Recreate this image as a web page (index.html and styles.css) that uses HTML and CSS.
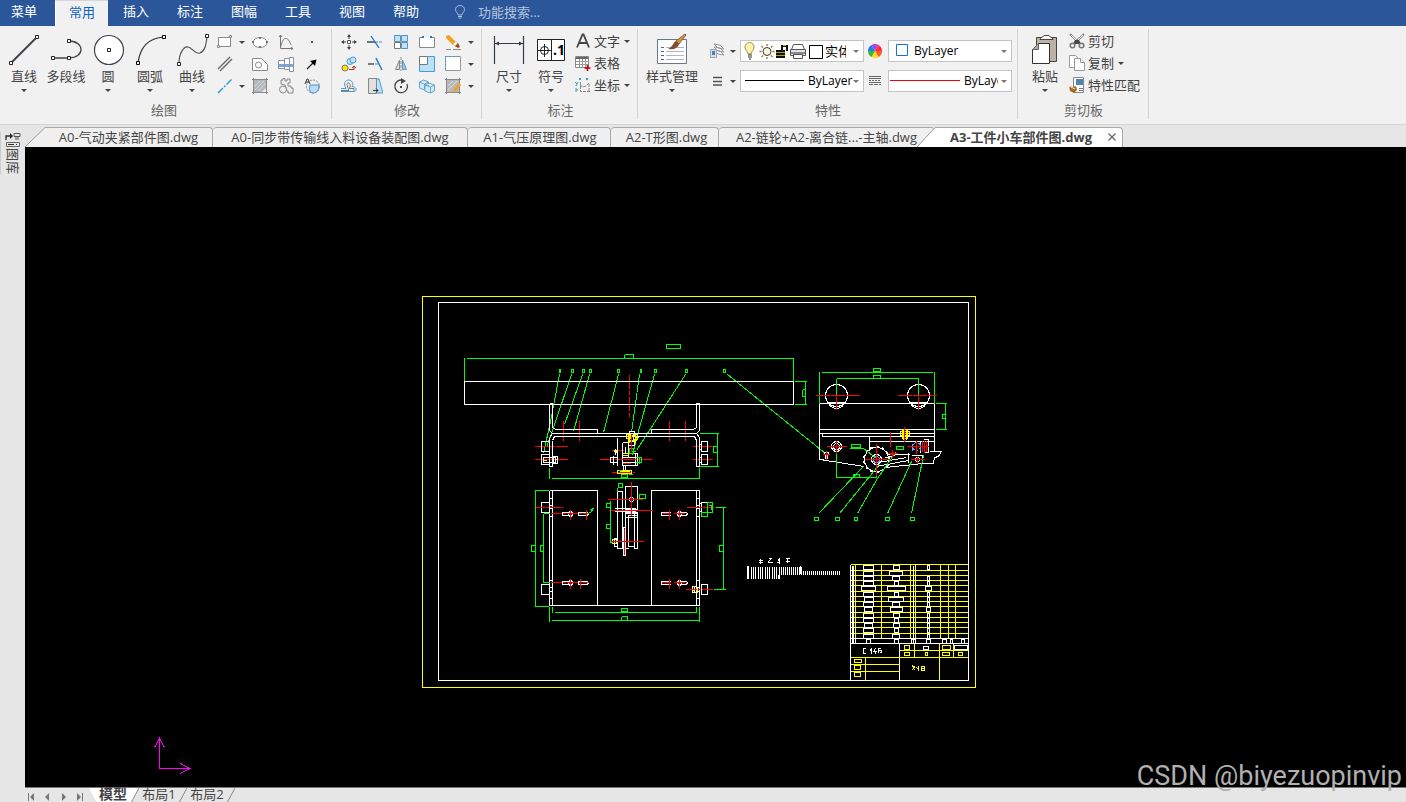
FILE: index.html
```html
<!DOCTYPE html>
<html lang="zh-CN">
<head>
<meta charset="utf-8">
<title>A3-工件小车部件图.dwg</title>
<link rel="stylesheet" href="styles.css">
</head>
<body>
<nav class="menubar">
  <button class="menu-item menu-first">菜单</button>
  <button class="menu-item is-active">常用</button>
  <button class="menu-item">插入</button>
  <button class="menu-item">标注</button>
  <button class="menu-item">图幅</button>
  <button class="menu-item">工具</button>
  <button class="menu-item">视图</button>
  <button class="menu-item">帮助</button>
  <label class="search">
    <svg width="12" height="14" viewBox="0 0 12 14" fill="none" stroke="#a9bcd9"><path d="M4 10V9C3 7.500 1.500 6.500 1.500 4.500a4.500 4 0 0 1 9 0C10.500 6.500 9 7.500 8 9v1z"/><path d="M4 11.500h4M4.500 13h3"/></svg>
    <input type="text" placeholder="功能搜索..." aria-label="功能搜索">
  </label>
</nav>

<header class="ribbon">
  <section class="group g-draw">
    <div class="group-body">
      <button class="big"><svg width="34" height="34" viewBox="0 0 34 34"><path d="M4 30 30 4" stroke="#3f444d" stroke-width="2"/><g fill="#fff" stroke="#222"><path d="M2.500 28.500h3v3h-3zM28.500 2.500h3v3h-3z"/></g></svg><span>直线</span><i class="caret"></i></button>
      <button class="big"><svg width="34" height="34" viewBox="0 0 34 34"><path d="M4 25h16c16 0 16-17 0-17" fill="none" stroke="#3f444d" stroke-width="1.300"/><g fill="#fff" stroke="#222"><path d="M2.500 23.500h3v3h-3zM18.500 23.500h3v3h-3zM18.500 6.500h3v3h-3z"/></g></svg><span>多段线</span></button>
      <button class="big"><svg width="34" height="34" viewBox="0 0 34 34"><circle cx="18" cy="17" r="14.500" fill="#fff" stroke="#3f444d" stroke-width="1.200"/><path d="M16.500 15.500h3v3h-3z" fill="#fff" stroke="#222"/></svg><span>圆</span><i class="caret"></i></button>
      <button class="big"><svg width="34" height="34" viewBox="0 0 34 34"><path d="M5 30C7 14 16 5 31 4" fill="none" stroke="#333" stroke-width="1.200"/><g fill="#fff" stroke="#000"><path d="M3.500 28.500h3v3h-3zM29.500 2.500h3v3h-3z"/></g></svg><span>圆弧</span><i class="caret"></i></button>
      <button class="big"><svg width="34" height="34" viewBox="0 0 34 34"><path d="M4 30C4 20 9 13 13 14c5 1 7 8 12 6 5-2 6-8 7-16" fill="none" stroke="#555" stroke-width="1.200"/><g fill="#fff" stroke="#222"><path d="M2.500 29.500h3v3h-3zM30.500 1.500h3v3h-3z"/></g></svg><span>曲线</span><i class="caret"></i></button>
      <div class="tools tools-draw">
        <button aria-label="矩形"><svg width="16" height="16" viewBox="0 0 16 16" fill="#fff" stroke="#888"><path d="M1.500 3.500h12v9h-12z"/><path d="M12.500 1.500h2v2h-2zM.5 11.500h2v2h-2z"/></svg></button>
        <button aria-label="矩形选项"><i class="caret"></i></button>
        <button aria-label="椭圆"><svg width="16" height="16" viewBox="0 0 16 16"><ellipse cx="8" cy="8.500" rx="7" ry="5" fill="#fff" stroke="#888"/><path d="M0 7h2v2H0zM14 7h2v2h-2zM7 3h2v2H7zM7 12h2v2H7z" fill="#777"/></svg></button>
        <button aria-label="函数曲线"><svg width="16" height="16" viewBox="0 0 16 16" fill="none" stroke="#777"><path d="M2.500 1v13.500H15M1 3l1.500-2L4 3M13 13l2 1.500-2 1.500M3 12C5 2 10 2 13 11"/></svg></button>
        <button aria-label="点"><svg width="16" height="16" viewBox="0 0 16 16"><path d="M7 7h2v2H7z" fill="#555"/></svg></button>
        <button aria-label="平行线"><svg width="16" height="16" viewBox="0 0 16 16" stroke="#666" stroke-width="1.400"><path d="M1 13 13 1M3 15 15 3"/></svg></button>
        <span></span>
        <button aria-label="轮廓"><svg width="16" height="16" viewBox="0 0 16 16" fill="#fff" stroke="#888"><path d="M.5 2.500h9l6 6v6H.5z"/><circle cx="6.500" cy="9" r="3"/></svg></button>
        <button aria-label="轴"><svg width="16" height="16" viewBox="0 0 16 16" stroke="#8a93a0" fill="#fff"><path d="M.5 4.500h6v8h-6zM6.500 2.500h5v11h-5zM11.500 1.500h4v14h-4z"/><path d="M1 8h5v3H1zM7 8h4v3H7zM12 8h3v3h-3z" fill="#7ba6d8" stroke="none"/></svg></button>
        <button aria-label="箭头"><svg width="16" height="16" viewBox="0 0 16 16"><path d="m3 13 6-6" stroke="#222" stroke-width="1.200"/><path d="M12.500 3.500 11 10 6 5z" fill="#000"/></svg></button>
        <button aria-label="中心线"><svg width="16" height="16" viewBox="0 0 16 16"><path d="M1 15 15 1" stroke="#2e9fe0" stroke-width="1.500" stroke-dasharray="7 1.500 2 1.500"/></svg></button>
        <button aria-label="中心线选项"><i class="caret"></i></button>
        <button aria-label="剖面线"><svg width="16" height="16" viewBox="0 0 16 16"><path d="M2 2h12v12H2z" fill="#b4b9bc"/><path d="M1.500 0v16M14.500 0v16M0 1.500h16M0 14.500h16" stroke="#888"/><path d="m3 8 5-5M3 12l9-9M6 13l7-7" stroke="#d4d4d4"/><path d="m10 14 4-4v4z" fill="#eee"/></svg></button>
        <button aria-label="齿形"><svg width="16" height="16" viewBox="0 0 16 16" fill="#eee" stroke="#888"><path d="M3 6V2h2V.500h2V3h2V1h3v4h-2v3h3v2h2v5h-5v-2H9l-2-6z"/><circle cx="5" cy="11.500" r="3.500"/></svg></button>
        <button aria-label="局部放大"><svg width="16" height="16" viewBox="0 0 16 16"><circle cx="9" cy="8.500" r="6.500" fill="none" stroke="#888" stroke-dasharray="2 1"/><path d="M6 7h9c0 5-2 8-6 8-3 0-4-3-3-8z" fill="#b9dcf7" stroke="#4a90c8"/><path d="M1 6 3 1h1l2 5M2 4h3" fill="none" stroke="#333"/></svg></button>
      </div>
    </div>
    <h2>绘图</h2>
  </section>

  <section class="group g-modify">
    <div class="group-body">
      <div class="tools tools-modify">
        <button aria-label="平移"><svg width="16" height="16" viewBox="0 0 16 16"><path d="M6.500 6.500h3v3h-3z" fill="#fff" stroke="#555"/><path d="M8 5V1M8 11v4M5 8H1M11 8h4" stroke="#444"/><path d="m8 0 2 3H6zM8 16l2-3H6zM0 8l3-2v4zM16 8l-3-2v4z" fill="#444"/></svg></button>
        <button aria-label="裁剪"><svg width="16" height="16" viewBox="0 0 16 16"><path d="M0 8h8" stroke="#555" stroke-width="1.600"/><path d="M8 8h8" stroke="#3a94dd" stroke-dasharray="3 1"/><path d="m4 2 8 12" stroke="#246fc2" stroke-width="1.300"/></svg></button>
        <button aria-label="阵列"><svg width="16" height="16" viewBox="0 0 16 16" fill="#bfe2fa" stroke="#5f93b6"><path d="M1.500 1.500h6v6h-6zM8.500 1.500h6v6h-6zM8.500 8.500h6v6h-6z"/><path d="M1.500 8.500h6v6h-6z" fill="#fff" stroke="#777"/></svg></button>
        <button aria-label="打断"><svg width="16" height="16" viewBox="0 0 16 16"><path d="M4 3.500H.5v10h15v-10H12" fill="#fff" stroke="#888"/><path d="M3 2h2v2H3zM11 2h2v2h-2z" fill="#2878c8"/></svg></button>
        <button aria-label="删除"><svg width="16" height="16" viewBox="0 0 16 16"><path d="m1 2 3-1 7 7-3 3-7-7z" fill="#f3a11b"/><path d="m8 10 3-3 2 3-2 3z" fill="#fff" stroke="#999" stroke-width=".5"/><path d="m10 12 3-3 2 4-2 1z" fill="#a44b17"/><path d="M1 15.500h5M8 15.500h8" stroke="#888"/></svg></button>
        <button aria-label="删除选项"><i class="caret"></i></button>
        <button aria-label="平移复制"><svg width="16" height="16" viewBox="0 0 16 16"><circle cx="9" cy="5.500" r="3" fill="#bfe2fa" stroke="#4a9bd0"/><circle cx="12" cy="4" r="3" fill="#bfe2fa" stroke="#4a9bd0"/><circle cx="4" cy="12" r="3" fill="#ffe600" stroke="#776"/><path d="M8 13.500h5v-3M11 12l2-2 2 2" fill="none" stroke="#a33"/></svg></button>
        <button aria-label="延伸"><svg width="16" height="16" viewBox="0 0 16 16"><path d="M1 8h6" stroke="#555" stroke-width="1.500"/><path d="M8 8h3" stroke="#3a94dd"/><path d="m9 2 6 12" stroke="#2878c8" stroke-width="1.500"/></svg></button>
        <button aria-label="镜像"><svg width="16" height="16" viewBox="0 0 16 16"><path d="M6.500 4v9.500h-4z" fill="#ddd" stroke="#888"/><path d="M9.500 4v9.500h4z" fill="#9dc9e8" stroke="#5796c4"/><path d="M8 1v14" stroke="#888" stroke-dasharray="3 1"/></svg></button>
        <button aria-label="缩放"><svg width="16" height="16" viewBox="0 0 16 16"><path d="M.5.500h15v15H.500z" fill="#b9e1f8" stroke="#4a9bd0"/><path d="M.5.500h8v8h-8z" fill="#fff" stroke="#777"/></svg></button>
        <button aria-label="拉伸"><svg width="16" height="16" viewBox="0 0 16 16"><path d="M.5.500h15v14H.500z" fill="#fff" stroke="#999"/><path d="M0 .5h16M.5 0v15" stroke="#3f9be0" stroke-dasharray="2 2"/></svg></button>
        <button aria-label="拉伸选项"><i class="caret"></i></button>
        <button aria-label="等距线"><svg width="16" height="16" viewBox="0 0 16 16" fill="none"><path d="M0 10.500h5C2 6 4 2 7.500 2S13 6 11 8.500c5 0 5 5 2 5H0" stroke="#4a9bd0"/><path d="M0 12.500h8C5 5 6 5 7.500 5S10 7 8.500 10.500H13v2" stroke="#777"/></svg></button>
        <button aria-label="斜切"><svg width="16" height="16" viewBox="0 0 16 16"><path d="M8 1h4l4 14H8z" fill="#b9e1f8" stroke="#4a9bd0"/><path d="M1.500.500H9.500v15h-8z" fill="#e0e0e0" stroke="#888"/><path d="M6 12.500h5M9 10.500l2 2-2 2" fill="none" stroke="#333"/></svg></button>
        <button aria-label="旋转"><svg width="16" height="16" viewBox="0 0 16 16"><path d="M10 2.300A6.300 6.300 0 1 0 14 6" fill="none" stroke="#444" stroke-width="1.300"/><path d="m8 0 5 3-5 3z" fill="#444"/><path d="M7 8h2v2H7z" fill="#444"/></svg></button>
        <button aria-label="复制对象"><svg width="16" height="16" viewBox="0 0 16 16" fill="#ceeafa" stroke="#6ba5c8"><path d="m.5 4 4-2 5 2v6l-4 2-5-2zM.5 4l5 2 4-2M5.500 6v5"/><path d="m6 7 4-2 5.500 2v6l-4 2L6 13zM6 7l5.500 2 4-2M11.500 9v6"/></svg></button>
        <button aria-label="编辑剖面"><svg width="16" height="16" viewBox="0 0 16 16"><path d="M2 2h12v12H2z" fill="#b8b8b8"/><path d="M1.500 0v16M14.500 0v16M0 1.500h16M0 14.500h16" stroke="#888"/><path d="m3 8 5-5M3 12l9-9" stroke="#ddd"/><path d="m9 11 5-6 2 2-5 6-3 1z" fill="#f0a12a"/></svg></button>
        <button aria-label="编辑剖面选项"><i class="caret"></i></button>
      </div>
    </div>
    <h2>修改</h2>
  </section>

  <section class="group g-note">
    <div class="group-body">
      <button class="big"><svg width="34" height="34" viewBox="0 0 34 34"><path d="M2.500 3v28M31.500 3v28M3 10.500h28" stroke="#333b44" stroke-width="1.200"/><path d="m3 10.500 4-2v4zM31 10.500l-4-2v4z" fill="#333b44"/></svg><span>尺寸</span><i class="caret"></i></button>
      <button class="big"><svg width="34" height="34" viewBox="0 0 34 34"><path d="M3.500 6.500h27v21h-27z" fill="#fff" stroke="#222"/><path d="M17.500 6v22M4 17.500h13M10.500 11v13" stroke="#222"/><circle cx="10.500" cy="17.500" r="4" fill="none" stroke="#222"/><text x="19" y="22" class="symbol-text">.1</text></svg><span>符号</span><i class="caret"></i></button>
      <div class="list">
        <button><svg width="16" height="16" viewBox="0 0 16 16"><path d="M2 14.500 7.500 1.500h1L14 14.500M4 10h8" fill="none" stroke="#444" stroke-width="1.800"/></svg><span>文字</span><i class="caret"></i></button>
        <button><svg width="16" height="16" viewBox="0 0 16 16"><path d="M.5 1.500h13v11H.500z" fill="#fff" stroke="#888"/><path d="M1 2h12v2H1z" fill="#666"/><path d="M1 6.500h12M1 9.500h12M4.500 4v8M7.500 4v8M10.500 4v8" stroke="#999"/><path d="M12.500 10v6M9.500 13h6" stroke="#c00010" stroke-width="1.600"/></svg><span>表格</span></button>
        <button><svg width="16" height="16" viewBox="0 0 16 16" fill="none"><path d="M5.500 5v9.500H15M5 8l3 2 3-1 3-3M14 7v7" stroke="#888" stroke-dasharray="3 1"/><path d="m4 1 2 2M6 1 4 3M11 1l2 2M13 1l-2 2M0 5l2 2M3 5 1 9M0 12h2v2H0" stroke="#4298cc"/></svg><span>坐标</span><i class="caret"></i></button>
      </div>
    </div>
    <h2>标注</h2>
  </section>

  <section class="group g-props">
    <div class="group-body">
      <button class="big wide"><svg width="34" height="34" viewBox="0 0 34 34"><path d="M2.500 6.500h29v24h-29z" fill="#fff" stroke="#678" /><path d="M6 14.500h3M6 18.500h3M6 22.500h3M6 26.500h3" stroke="#4d6688"/><path d="M11 14.500h18M11 18.500h18M11 22.500h18M11 26.500h18" stroke="#abb7ca"/><path d="m30 1-9 7 3 3 7-9z" fill="#e8922e" stroke="#765"/><path d="M21 8c-3 1-3 6-8 8 6 1 10-1 11-5z" fill="#805032"/></svg><span>样式管理</span><i class="caret"></i></button>
      <div class="props">
        <button aria-label="图层"><svg width="16" height="16" viewBox="0 0 16 16"><path d="m5 1 6 1 4 4-6-1zM5 4l6 1 4 4-6-1zM5 7l6 1 4 4-6-1z" fill="#f3f3f3" stroke="#999"/><path d="M1.500 6.500h6v8h-6z" fill="#d5dfeb" stroke="#9ab"/><path d="M3 8h3v4H3z" fill="#4b7eb1"/></svg></button>
        <button aria-label="图层选项"><i class="caret"></i></button>
        <label class="combo">
          <svg width="84" height="18" viewBox="0 0 84 18">
            <path d="M7 12c0-3-3-3-3-7a4.500 4.500 0 0 1 9 0c0 4-3 4-3 7z" fill="#fff3ae" stroke="#a58d46"/><path d="M7 13h4M7 15h4M8 17h2" stroke="#333" stroke-width="1.200"/>
            <circle cx="26" cy="9.500" r="4" fill="#fff8e0" stroke="#333"/><path d="M26 2v2M26 15v2M18.500 9.500h2M31.500 9.500h2M20.500 4l1.500 1.500M31.500 4 30 5.500M20.500 15l1.500-1.500M31.500 15 30 13.500" stroke="#a67343" stroke-width="1.400"/>
            <path d="M35 8h9v8h-9z" fill="#111"/><path d="M35 10.500h9M35 13.500h9" stroke="#aaa800"/><path d="M41 8V4h5v5" fill="none" stroke="#111" stroke-width="2"/><path d="M42 3.500h3" stroke="#bbb800"/>
            <path d="M52.500 2.500h9l2 5h-13z" fill="#fff" stroke="#555"/><path d="M49.500 7.500h15v6h-15z" fill="#dfe5ed" stroke="#555"/><path d="M50 11h14" stroke="#333"/><path d="M52.500 12.500h9v4h-9z" fill="#fff" stroke="#555"/>
            <path d="M68.500 3.500h13v13h-13z" fill="#fff" stroke="#000"/>
          </svg>
          <select class="pick-layer" aria-label="当前图层"><option>实体层</option></select><i class="caret pale"></i>
        </label>
        <button aria-label="颜色"><svg width="14" height="14" viewBox="0 0 14 14"><path d="M7 7 3.500 1A7 7 0 0 1 10.500 1z" fill="#b040e8"/><path d="M7 7 10.500 1A7 7 0 0 1 14 7z" fill="#ff2e3a"/><path d="M7 7h7a7 7 0 0 1-3.500 6z" fill="#ff5a1f"/><path d="m7 7 3.500 6a7 7 0 0 1-7 0z" fill="#ffd91a"/><path d="m7 7-3.500 6A7 7 0 0 1 0 7z" fill="#38b838"/><path d="M7 7H0a7 7 0 0 1 3.500-6z" fill="#2878ee"/></svg></button>
        <label class="combo">
          <svg width="25" height="18" viewBox="0 0 25 18"><path d="M7.500 2.500h11v11h-11z" fill="#fff" stroke="#1574d0"/></svg>
          <select class="pick-fill" aria-label="颜色"><option>ByLayer</option></select><i class="caret pale"></i>
        </label>
        <button aria-label="线型"><svg width="16" height="16" viewBox="0 0 16 16"><path d="M4 4.500h9M4 8.500h9M4 12h9" stroke="#555" stroke-width="1.300"/></svg></button>
        <button aria-label="线型选项"><i class="caret"></i></button>
        <label class="combo">
          <svg width="67" height="18" viewBox="0 0 67 18"><path d="M4 8.500h59" stroke="#000"/></svg>
          <select class="pick-fill" aria-label="线型"><option>ByLayer</option></select><i class="caret pale"></i>
        </label>
        <button aria-label="线宽"><svg width="14" height="14" viewBox="0 0 14 14" stroke="#666"><path d="M1 2.500h12M1 4.500h12"/><path d="M1 6.500h12" stroke-dasharray="2 1"/><path d="M1 8.500h12"/><path d="M1 10.500h12" stroke-dasharray="4 1"/></svg></button>
        <label class="combo">
          <svg width="75" height="18" viewBox="0 0 75 18"><path d="M1 8.500h70" stroke="#f00000"/></svg>
          <select class="pick-width" aria-label="线宽"><option>ByLayer</option></select><i class="caret pale"></i>
        </label>
      </div>
    </div>
    <h2>特性</h2>
  </section>

  <section class="group g-clip">
    <div class="group-body">
      <button class="big"><svg width="34" height="34" viewBox="0 0 34 34"><path d="M8.500 4.500h20v24h-20z" fill="#bcb2a8" stroke="#444"/><path d="M12 6.500c0-3 4-2 4-4h5c0 2 4 1 4 4z" fill="#fff" stroke="#444"/><path d="m10.500 10.500-6 6v14h17v-20z" fill="#fff" stroke="#333"/><path d="M10.500 10.500v6h-6" fill="#aaa" stroke="#666"/></svg><span>粘贴</span><i class="caret"></i></button>
      <div class="list">
        <button><svg width="16" height="16" viewBox="0 0 16 16" fill="none"><path d="m1 1 10 10M15 1 5 11" stroke="#888" stroke-width="2"/><path d="m2 2 9 9M14 2l-9 9" stroke="#fff"/><path d="M6 7h4l2 4H4z" fill="#444"/><circle cx="3.500" cy="12.500" r="2.300" stroke="#777" stroke-width="1.500"/><circle cx="12.500" cy="12.500" r="2.300" stroke="#777" stroke-width="1.500"/></svg><span>剪切</span></button>
        <button><svg width="16" height="16" viewBox="0 0 16 16" fill="#fff" stroke="#999"><path d="M.5.500h6l3 3v9h-9z"/><path d="M5.500 3.500h6l4 4v8h-10z"/><path d="M11.500 3.500v4h4"/></svg><span>复制</span><i class="caret"></i></button>
        <button><svg width="16" height="16" viewBox="0 0 16 16"><path d="M4.500.500h10v15h-10z" fill="#fff" stroke="#888"/><path d="M7 2h7v6H7z" fill="#4e82b8"/><path d="M10 11.500h4M10 13.500h4" stroke="#777"/><path d="m0 9 4 1 3-1 1 4-3 3-4-2z" fill="#ad6524"/><path d="m0 9 6 3" stroke="#eee"/></svg><span>特性匹配</span></button>
      </div>
    </div>
    <h2>剪切板</h2>
  </section>
</header>

<div class="workspace">
  <aside class="sidebar">
    <button class="library"><svg width="16" height="16" viewBox="0 0 16 16" fill="none" stroke="#333"><path d="M1 8V4h5" stroke-width="1.400"/><path d="m5 1 3 3-3 3z" fill="#222" stroke="none"/><path d="M9 1.500h6v3H9zM11 5v3M13 5v3" stroke="#555"/><path d="M1.500 10.500h13v4h-13z" stroke="#666"/><path d="M3 12.500h6M11 12.500h1" stroke="#333"/></svg><span>图库</span></button>
  </aside>
  <div class="document">
    <div class="tabs">
      <svg class="slant" width="20" height="20" viewBox="0 0 20 20"><path d="M0 20 20 0v20z" fill="#f0f0f0"/><path d="M0 20 20 .5" stroke="#999"/></svg>
      <button class="tab tab-a">A0-气动夹紧部件图.dwg</button>
      <button class="tab tab-b">A0-同步带传输线入料设备装配图.dwg</button>
      <button class="tab tab-c">A1-气压原理图.dwg</button>
      <button class="tab tab-d">A2-T形图.dwg</button>
      <button class="tab tab-e">A2-链轮+A2-离合链...-主轴.dwg</button>
      <svg class="slant over" width="18" height="20" viewBox="0 0 18 20"><path d="M0 20 18 0v20z" fill="#fff"/><path d="M0 20 18 .5" stroke="#999"/></svg>
      <div class="tab is-open"><span>A3-工件小车部件图.dwg</span><button class="close" aria-label="关闭"><svg width="8" height="8" viewBox="0 0 8 8"><path d="m.5.500 7 7M7.500.500l-7 7" stroke="#666" stroke-width="1.300"/></svg></button></div>
    </div>

    <main class="canvas">
      <svg class="drawing" viewBox="25 147 1381 640" role="img" aria-label="工件小车部件图">
        <g transform="translate(.5 .5)" fill="none" shape-rendering="crispEdges">
          <!-- sheet frame -->
          <path class="y" d="M422 296h553v391h-553z"/>
          <path class="w" d="M438 302h530v378h-530z"/>

          <!-- front view -->
          <path class="g" d="M666 344h14v4h-14zM466 358h327M464 357v24M793 357v24M624 354h9v4M624 354v4M794 381h12M794 404h12M805 381v23M802 389h3M802 389v7h3"/>
          <path class="g" d="M559 369h1v3h-1zM571 369h2v3h-2zM582 369h2v3h-2zM589 369h2v3h-2zM617 369h2v3h-2zM640 369h1v3h-1zM654 369h2v3h-2zM685 369h2v3h-2zM723 369h2v3h-2z"/>
          <path class="g" d="M559 374 550 421 543 453M571 374 553 427 546 447M582 374 564 424M589 374 573 431M618 374 603 432M639 374 631 432M654 374 637 434 632 455M685 374 636 450M727 374 825 453"/>
          <path class="r" d="M629 374v42" stroke-dasharray="14 2 4 2"/>
          <path class="r" d="M563 420v21M579 420v21M669 420v21M685 420v21M534 446h33M534 459h33M692 446h20M692 459h20M599 459h52M611 450h12M611 472h23" stroke-dasharray="14 1 5 1"/>
          <path class="w" d="M464 381h329v23h-329zM549 404v26l3 3M549 437v29h3v-26M549 403h3v24l3 2h42v4M549 437l3-4h144l3 4v29h-3v-26l-2-4H554l-2 4M699 403h-3v24l-3 2h-42v4M699 403v27l-3 3"/>
          <path class="w" d="M541 441h8v10h-8zM541 454h8v10h-8zM543 457h12v5h-12zM553 456h4v7h-4zM701 441h6v10h-6zM701 454h6v10h-6zM699 444h2v5h-2zM699 457h2v5h-2z"/>
          <path class="y" d="M543 460h3M555 459h2"/>
          <path class="g" d="M699 433h19M699 466h19M717 433v33M717 446h-4v6h4M551 478h147M549 467v11M699 467v11M621 474h6v3h-6z"/>
          <path class="w" d="M617 437v28M622 453h15v12h-15zM622 442h6v11M622 442v11M625 446v7M622 457h15M622 462h13M635 453v12M610 457h7v5h-7zM613 455v9M629 431h5v4h-5zM628 441h6v4h-6zM623 465v7M625 465v7M615 448v6M613 451h4"/>
          <path class="y" d="M626 434h4v4h-4zM627 440h9M633 434h4v5h-4zM628 433v9M635 433v9M627 436h3M634 437h4M629 433v9M622 455h6M622 453h6v3M617 470h14v3h-14zM619 471h10M613 450h3M615 452h2"/>
          <path class="g" d="M629 448h4v5h-4zM631 451h4M635 457h6v5h-6M639 456v7M628 474h4M618 470h3"/>
          <path class="r" d="M631 433v18M622 463h8M619 459h16M622 472h6"/>

          <!-- top view -->
          <path class="w" d="M549 490h48v115M651 605V490h48v115H549V490M552 490v115M696 490v115M549 498h3M549 505h3M549 508h3M549 516h3M549 580h3M549 587h3M549 591h3M549 598h3M696 498h3M696 505h3M696 508h3M696 516h3M696 580h3M696 587h3M696 591h3M696 598h3"/>
          <path class="w" d="M541 502h8v10h-8zM541 584h8v10h-8zM701 502h6v10h-6zM701 584h6v10h-6zM699 503h2v8h-2zM692 586h4v6h-4zM694 586v6"/>
          <path class="w" d="M568 512h-6v3h6M568 512l2-1 2 1v3l-2 1-2-1zM578 512h9l1 1-1 2h-9zM568 581h-6v3h6M568 581l2-1 2 1v3l-2 1-2-1zM578 581h9l1 1-1 2h-9zM670 512h-9v3h9M677 512l2-1 2 1v3l-2 1-2-1zM681 512h5l1 1-1 2h-5M670 581h-9v3h9M677 581l2-1 2 1v3l-2 1-2-1zM681 581h5l1 1-1 2h-5"/>
          <path class="r" d="M533 507h30M686 507h29M685 589h29M550 513h37M550 582h38M570 509v10M586 509v10M570 578v10M580 578v10M669 509v10M679 509v10M669 578v10M679 578v10M661 513h9M673 513h13M661 582h9M673 582h13" stroke-dasharray="11 1 3 1"/>
          <path class="g" d="M534 490h14M534 606h14M535 490v116M535 545h-4v6h4M543 513v69M543 513h6M543 582h6M543 545h-3v6h3M588 513l3-2 2-3-3 1 2 3M552 606v6M696 606v6M554 612h141M621 608h6v3h-6zM549 606v15M699 606v15M551 620h147M621 616h6v4M621 616v4M715 507h10M713 589h12M723 507v82M723 545h-4v6h4M707 502h5v10h-5zM708 505h3v4M701 512h6v4h-6z"/>
          <path class="y" d="M691 590h3M692 586h2M697 587v5"/>
          <path class="w" d="M617 491h5v57h-5zM625 486h12v23h-12zM625 512h12v5h-12zM634 509v39h3v-32M628 514v32h6M625 516v32h3M631 496l3 3-3 3-3-3zM614 508h21M614 511h21M625 513h12M628 515h8M623 527h2v28h-2zM612 539h4v4h-4zM614 538h3v8h-3z"/>
          <path class="r" d="M607 499h35M631 481v34M608 510h44M624 528v26M610 541h33"/>
          <path class="g" d="M610 500v42M609 542h3M610 503h-4v4h4M610 524h-4v4h4M618 483h4v4h-4zM617 487v4M639 494h6v4h-6z"/>
          <path class="y" d="M611 539h2M611 543h4"/>

          <!-- side view -->
          <path class="w" d="M819 403h115v26H819zM819 403v56M934 429v22M819 433h115M822 436h112M822 433v3M869 436v14M869 441h65"/>
          <path class="w" d="M819 459 864 466M885 467 922 463M819 459h4M887 454h22M885 457l10-2M878 462l28-5M876 466l32-6M922 463h11l1-6 4-1 3-5h-12M908 452v10M911 455h11v8"/>
          <g class="w"><circle cx="836" cy="395" r="11"/><circle cx="918" cy="395" r="11"/><path d="M827 402h18M829 405l7 4 7-4M909 402h18M911 405l7 4 7-4"/><circle cx="836" cy="446" r="5"/><circle cx="836" cy="446" r="3"/><circle cx="876" cy="459" r="5"/><circle cx="917" cy="459" r="2"/><path d="M824 452h4v2h-4zM825 454v4h2v-4M928 439v13M923 439h5M923 452h5M920 440v12"/></g>
          <circle class="w" cx="876" cy="459" r="12"/>
          <circle class="w" cx="876" cy="459" r="13" stroke-dasharray="3 3"/>
          <circle cx="876" cy="459" r="3" stroke="#8f9cff"/><circle cx="916" cy="446" r="4" stroke="#8f9cff" stroke-dasharray="3 1"/><path d="M912 443v7M920 443v7" stroke="#8f9cff"/>
          <path class="g" d="M821 372h111M819 371v32M934 371v32M873 368h7v3h-7zM836 378h82M836 378v17M918 378v17M873 375h7v3h-7zM935 403h11M935 429h11M945 403v26M945 414h-3v4h3M836 446v31M836 477h40M876 465v12M853 474h6v3h-6zM851 444h9v3h-9zM849 448h14l13 10M896 446h7v3h-7z"/>
          <path class="g" d="M818 513 863 466M839 513 878 465M857 513 877 478 895 452M887 513 911 461M911 513 923 455M814 517h4v3h-4zM835 517h4v3h-4zM854 517h3v3h-3zM885 517h4v3h-4zM910 517h4v3h-4z"/>
          <path class="r" d="M815 395h44M897 395h39" stroke-dasharray="14 1 14 1"/>
          <path class="r" d="M836 395v14M918 395v14M890 431v15M826 446h20M836 440v13M822 454h7M826 450v9M864 459h25M876 443v32M907 446h15M916 440v13M910 459h14M917 456v7M892 449v8M887 453h10M889 454h5M922 440v11M924 440v12M926 440v11M920 446h8"/>
          <path class="y" d="M902 429h5v9h-5zM900 431h9v4h-9zM903 428v11M906 428v11M901 433h8"/>
          <path class="r" d="M904 426v15"/>

          <!-- technical notes -->
          <path class="w" d="M747 565v13" stroke-width="2"/>
          <path class="w" d="M750 572h29" stroke-width="12" stroke-dasharray="1 1 1 1 1 2"/>
          <path class="w" d="M780 570h21" stroke-width="8" stroke-dasharray="1 1"/>
          <path class="w" d="M802 572h38" stroke-width="4" stroke-dasharray="1 1"/>
          <path class="w" d="M800 565v8M778 574v4M758 560h4M760 558v5M758 562h4M768 558h3l-3 3v1h4M777 561l2-3v5M776 562h2M785 558h4M787 558v4M785 561h4"/>

          <!-- parts list and title block -->
          <path class="y" d="M850 564h118M850 570h118M850 575h118M850 580h118M850 585h118M850 591h118M850 596h118M850 601h118M850 606h118M850 612h118M850 617h118M850 622h118M850 627h118M850 633h118M855 564v74M881 564v74M910 564v74M915 564v74M940 564v74M948 564v74M955 564v74"/>
          <path class="w" d="M850 564v116M850 638h118M850 643h118M899 643v37M853 565v78M852 565v78M913 565v78M855 638v5"/>
          <path class="w" d="M863 565h10v4h-10zM863 571h10v4h-10zM863 576h10v4h-10zM863 581h10v4h-10zM861 586h14v4h-14zM863 592h10v4h-10zM864 597h9v4h-9zM863 602h10v4h-10zM864 607h8v4h-8zM863 613h10v4h-10zM863 618h10v4h-10zM864 623h8v4h-8zM863 628h10v4h-10zM863 634h10v4h-10zM866 639h4v4h-4z"/>
          <path class="w" d="M893 565h6v4h-6zM889 571h13v4h-13zM892 576h7v4h-7zM894 581h4v4h-4zM887 586h18v4h-18zM894 592h4v4h-4zM888 597h15v4h-15zM892 602h7v4h-7zM890 607h12v4h-12zM893 613h6v4h-6zM894 618h4v4h-4zM893 623h6v4h-6zM894 628h4v4h-4zM892 634h7v4h-7zM894 639h4v4h-4z"/>
          <path class="w" d="M927 565h2v4h-2zM927 576h2v4h-2zM927 581h2v4h-2zM925 586h6v4h-6zM927 592h2v4h-2zM927 597h2v4h-2zM927 602h2v4h-2zM926 607h4v4h-4zM927 613h2v4h-2zM927 618h2v4h-2zM927 623h2v4h-2zM927 628h2v4h-2zM927 634h2v4h-2zM926 639h4v4h-4zM911 639h4v4h-4zM942 639h4v4h-4zM950 639h2v4h-2zM961 639h3v4h-3z"/>
          <path class="y" d="M899 650h69M850 657h118M850 664h49M850 671h49M865 657v23M914 643v14M939 643v37M953 643v14M904 645h5v4h-5zM904 652h5v3h-5zM925 652h2v3h-2zM942 645h8v4h-8zM942 652h7v3h-7zM958 652h4v3h-4zM854 659h7v3h-7zM854 665h6v4h-6zM854 672h6v4h-6z"/>
          <path class="w" d="M923 646h5v3h-5zM954 645h13v4h-13zM865 648h-2v5h2M869 651l2-3v5M875 648l-2 3h3M875 650v3M878 652v-4h2M878 650h3v2h-2"/>
          <path class="y" d="M911 666h3M912 665l2 5M914 667l-3 3M918 665v5M916 667l2 2M921 666h3v4h-3zM921 668h3"/>

          <!-- coordinate axes -->
          <path stroke="#f0f" d="M159 740v28h29M154 747l5-9 5 9M180 763l9 5-9 5M158 740h2M187 767h1M187 769h1"/>
        </g>
      </svg>
    </main>

    <footer class="layouts">
      <button class="nav" aria-label="首页"><svg width="7" height="8" viewBox="0 0 7 8"><path d="M.5 0v8" stroke="#777"/><path d="M6 0v8L2 4z" fill="#777"/></svg></button>
      <button class="nav" aria-label="上一页"><svg width="7" height="8" viewBox="0 0 7 8"><path d="M5 0v8L1 4z" fill="#777"/></svg></button>
      <button class="nav" aria-label="下一页"><svg width="7" height="8" viewBox="0 0 7 8"><path d="M2 0v8l4-4z" fill="#777"/></svg></button>
      <button class="nav" aria-label="末页"><svg width="7" height="8" viewBox="0 0 7 8"><path d="M6.500 0v8" stroke="#777"/><path d="M1 0v8l4-4z" fill="#777"/></svg></button>
      <button class="layout is-current">模型</button>
      <svg class="edge" width="8" height="15" viewBox="0 0 8 15"><path d="M0 0h8L0 15z" fill="#fff"/><path d="M8 0 0 15" stroke="#888"/></svg>
      <button class="layout">布局1</button>
      <svg class="edge" width="8" height="15" viewBox="0 0 8 15"><path d="M8 0 0 15" stroke="#888"/></svg>
      <button class="layout">布局2</button>
      <svg class="edge" width="8" height="15" viewBox="0 0 8 15"><path d="M8 0 0 15" stroke="#888"/></svg>
    </footer>
  </div>
</div>
<p class="watermark">CSDN @biyezuopinvip</p>
</body>
</html>
```
FILE: styles.css
```css
* { box-sizing: border-box; }

body {
  margin: 0;
  height: 100vh;
  display: flex;
  flex-direction: column;
  overflow: hidden;
  position: relative;
  background: #e6e6e6;
  color: #444;
  font: 13px/18px "Open Sans", "Noto Sans CJK SC", sans-serif;
}

button, input, select {
  margin: 0;
  padding: 0;
  border: 0;
  background: none;
  color: inherit;
  font: inherit;
}

svg { display: block; flex: none; }

.caret {
  display: block;
  flex: none;
  width: 0;
  height: 0;
  border: 3px solid transparent;
  border-top-color: #444;
  border-bottom: 0;
}
.caret.pale { border-top-color: #777; }

/* menu bar */
.menubar {
  display: flex;
  flex: none;
  height: 26px;
  background: #2b579a;
  color: #fff;
}
.menu-item { width: 54px; padding-bottom: 4px; }
.menu-first { width: 48px; margin-right: 7px; }
.menu-item.is-active {
  width: 53px;
  margin-right: 1px;
  background: #f1f1f1;
  color: #0a64c8;
  border-left: 1px solid #fff;
  border-top: 1px solid #d6d6d6;
}
.search {
  display: flex;
  align-items: center;
  gap: 12px;
  padding: 0 0 2px 21px;
}
.search input { width: 160px; outline: 0; }
.search input::placeholder { color: #b5c4dc; opacity: 1; }

/* ribbon */
.ribbon {
  display: flex;
  flex: none;
  padding: 3px 0 5px;
  background: #f1f1f1;
  border-bottom: 1px solid #d4d4d4;
}
.group {
  display: flex;
  flex-direction: column;
  border-right: 1px solid #d4d4d4;
}
.group-body { display: flex; height: 72px; }
.group h2 {
  margin: 0;
  text-align: center;
  font-size: 13px;
  line-height: 18px;
  font-weight: 400;
  color: #666;
}
.g-draw { padding: 0 6px 0 3px; }
.g-modify { padding: 0 6px 0 4px; }
.g-modify h2, .g-note h2, .g-props h2, .g-clip h2 { padding-left: 3px; }
.g-note { padding: 0 7px 0 6px; }
.g-props { padding: 0 5px 0 3px; }
.g-clip { padding: 0 8px 0 6px; }

.big {
  display: flex;
  flex-direction: column;
  align-items: center;
  width: 42px;
  padding-top: 4px;
  white-space: nowrap;
}
.big span { line-height: 18px; }
.big.wide { width: 62px; margin-right: 5px; }
.big .caret { margin-top: 4px; }

.tools {
  display: grid;
  grid-auto-rows: 22px;
  padding-top: 2px;
}
.tools button { display: grid; place-items: center; }
.tools-draw { grid-template-columns: 24px 10px 26px 26px 26px; }
.tools-modify { grid-template-columns: repeat(5, 26px) 9px; }

.list {
  display: flex;
  flex-direction: column;
  padding: 1px 0 0 3px;
}
.list button {
  display: flex;
  align-items: center;
  gap: 3px;
  height: 22px;
  white-space: nowrap;
}
.list .caret { margin-left: 1px; }

.props {
  display: grid;
  grid-template-columns: 18px 14px 124px 22px 126px;
  grid-auto-rows: 30px;
  align-items: center;
  padding-top: 7px;
}
.props > button { display: grid; place-items: center; }
.combo {
  display: flex;
  align-items: center;
  height: 22px;
  padding-right: 4px;
  border: 1px solid #c4c4c4;
  background: #fff;
  color: #000;
}
.props > .combo:nth-child(5n) { margin-left: 2px; }
.combo select {
  appearance: none;
  min-width: 0;
  height: 20px;
  overflow: hidden;
  white-space: nowrap;
  text-overflow: clip;
  outline: 0;
  font-size: 12px;
}
.combo .caret { margin-left: auto; }
.combo .pick-layer { width: 21px; font-size: 13px; }
.combo .pick-fill { flex: 1; }
.combo .pick-width { width: 34px; }
.symbol-text { font: 700 14px "Open Sans", sans-serif; fill: #000; }

/* work area */
.workspace { display: flex; flex: 1; min-height: 0; }
.sidebar {
  flex: none;
  width: 25px;
  padding-top: 7px;
}
.library {
  display: flex;
  flex-direction: column;
  align-items: center;
  width: 25px;
  border-left: 1px solid #ccc;
}
.library span {
  writing-mode: vertical-rl;
  text-orientation: sideways;
  font-size: 13px;
}
.document {
  display: flex;
  flex: 1;
  flex-direction: column;
  min-width: 0;
}

.tabs { display: flex; flex: none; height: 22px; padding-top: 2px; }
.tab {
  height: 20px;
  padding-bottom: 2px;
  line-height: 16px;
  white-space: nowrap;
  background: #f0f0f0;
  border-top: 1px solid #aaa;
  border-right: 1px solid #aaa;
  border-radius: 0 4px 0 0;
}
.tab + .tab { border-radius: 4px 4px 0 0; }
.tab-a { width: 168px; }
.tab-b { width: 255px; }
.tab-c { width: 143px; padding-left: 2px; }
.tab-d { width: 108px; padding-left: 4px; }
.tab-e { width: 216px; }
.slant.over { margin-left: -18px; }
.tab.is-open {
  display: flex;
  align-items: center;
  gap: 16px;
  padding: 0 6px 2px 15px;
  background: #fff;
  font-weight: 700;
}

.canvas { flex: 1; min-height: 0; background: #000; }
.drawing { width: 100%; height: 100%; }
.w { stroke: #fff; }
.g { stroke: #0f0; }
.r { stroke: #f00; }
.y { stroke: #ff0; }

.layouts {
  display: flex;
  flex: none;
  align-items: center;
  height: 15px;
  border-top: 1px solid #777;
}
.nav { display: grid; place-items: center; width: 16px; padding: 3px 3px 0 0; }
.layout {
  height: 14px;
  width: 40px;
  line-height: 12px;
  padding-bottom: 2px;
  white-space: nowrap;
}
.layout.is-current {
  width: 42px;
  padding-left: 6px;
  background: linear-gradient(62deg, transparent 6px, #fff 7px);
  font-size: 14px;
  font-weight: 700;
}

.watermark {
  position: absolute;
  right: 4px;
  bottom: 9px;
  margin: 0;
  font: 27px/34px Roboto, sans-serif;
  color: #b0b0b0;
}
```
